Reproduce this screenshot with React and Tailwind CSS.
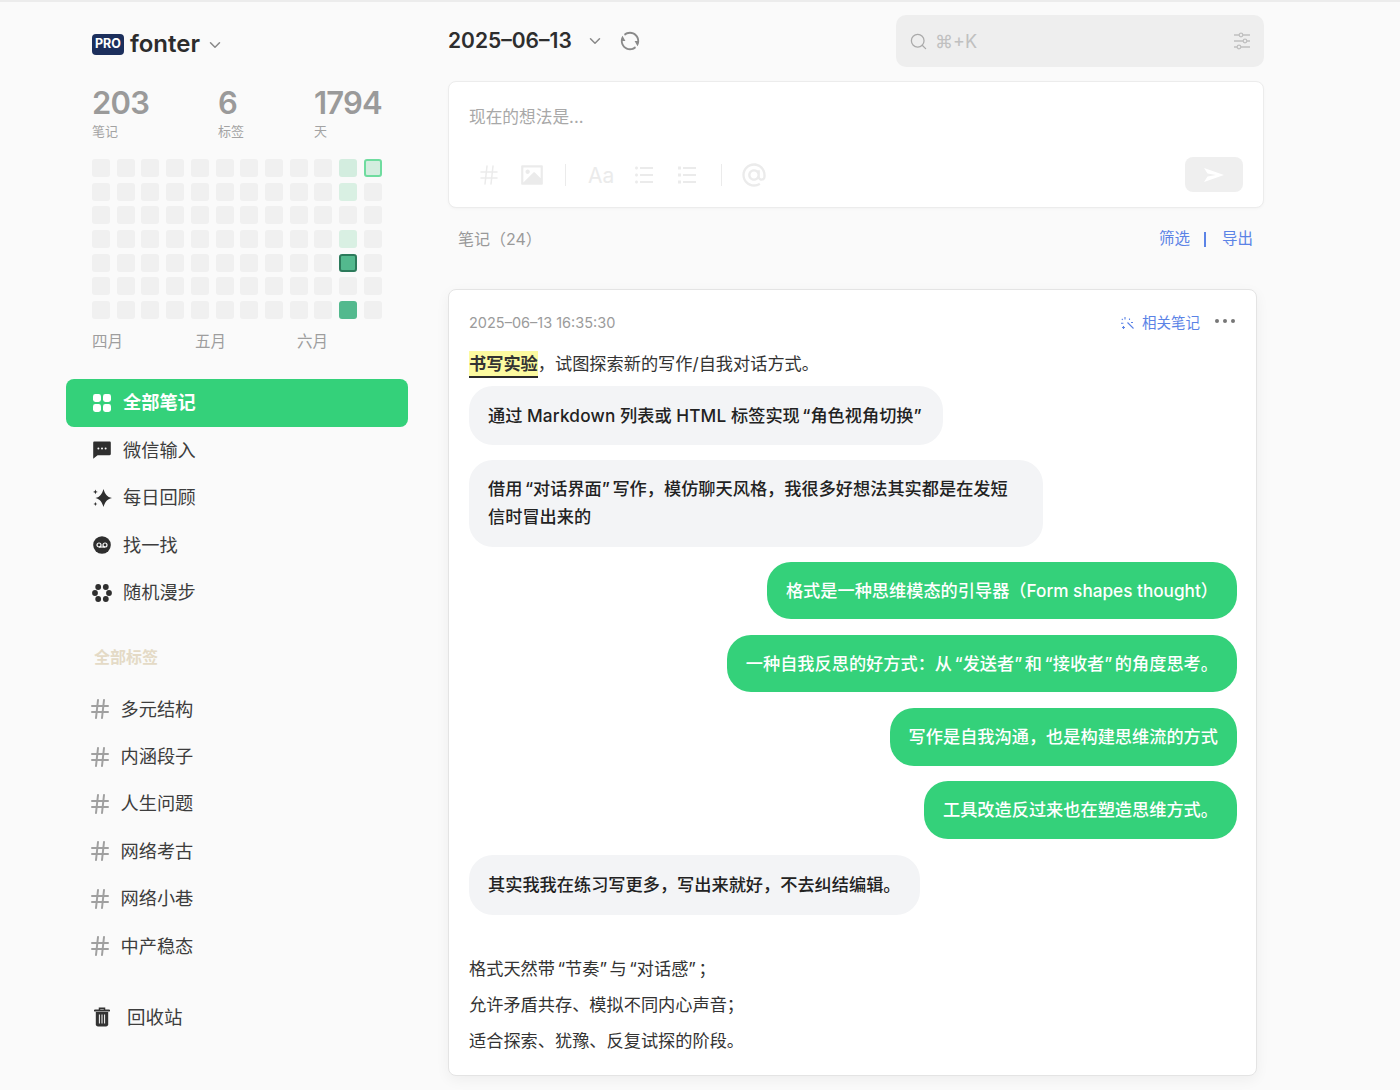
import React from "react";
import { ChevronDown, Search, Hash } from "lucide-react";
import { RiRefreshLine, RiImageFill, RiListUnordered, RiListCheck, RiAtLine } from "react-icons/ri";

const font = "font-['Inter','Noto_Sans_CJK_SC',sans-serif]";

const activity = {
  "0-10": "bg-[#d3eddf]",
  "0-11": "bg-[#d3eddf] border-2 border-[#6fdc9f]",
  "1-10": "bg-[#d9f0e3]",
  "3-10": "bg-[#d9f0e3]",
  "4-10": "bg-[#53b98e] border-2 border-[#2c7a5b]",
  "6-10": "bg-[#53b98e]",
};

const GridIcon = () => (
  <svg width="20" height="20" viewBox="0 0 20 20" fill="currentColor">
    <rect x="1" y="1" width="8" height="8" rx="2.4" />
    <rect x="11" y="1" width="8" height="8" rx="2.4" />
    <rect x="1" y="11" width="8" height="8" rx="2.4" />
    <rect x="11" y="11" width="8" height="8" rx="2.4" />
  </svg>
);

const ChatIcon = () => (
  <svg width="20" height="20" viewBox="0 0 20 20" fill="currentColor">
    <path d="M2.4 1.500h15.200c.7 0 1.200.5 1.200 1.200v11.400c0 .7-.5 1.200-1.200 1.200H5.600l-4.400 3.400V2.700c0-.7.5-1.200 1.200-1.200z" />
    <circle cx="6.400" cy="8.400" r="1" fill="#fafafa" />
    <circle cx="10" cy="8.400" r="1" fill="#fafafa" />
    <circle cx="13.600" cy="8.400" r="1" fill="#fafafa" />
  </svg>
);

const SparkIcon = () => (
  <svg width="20" height="20" viewBox="0 0 20 20" fill="currentColor">
    <path d="M11.500 1c1.500 5 3.500 8 8.500 9-5 1-7 4-8.500 9-1.500-5-3.500-8-8-9 4.500-1 6.500-4 8-9z" />
    <path d="M3.400 1.500l.7 1.700 1.700.7-1.700.7-.7 1.700-.7-1.700L1 3.900l1.700-.7zM3.400 14l.6 1.400 1.400.6-1.400.6-.6 1.400-.6-1.400-1.400-.6 1.400-.6z" />
  </svg>
);

const FindIcon = () => (
  <svg width="20" height="20" viewBox="0 0 20 20">
    <circle cx="10" cy="10" r="8.800" fill="currentColor" />
    <circle cx="7" cy="10" r="2" fill="none" stroke="#fafafa" strokeWidth="1.200" />
    <circle cx="13" cy="10" r="2" fill="none" stroke="#fafafa" strokeWidth="1.200" />
    <path d="M7 12h6" stroke="#fafafa" strokeWidth="1.200" />
  </svg>
);

const FlowerIcon = () => (
  <svg width="20" height="20" viewBox="0 0 20 20" fill="currentColor">
    <circle cx="6.200" cy="4" r="2.900" />
    <circle cx="13.800" cy="4" r="2.900" />
    <circle cx="3" cy="10" r="2.900" />
    <circle cx="17" cy="10" r="2.900" />
    <circle cx="6.200" cy="16" r="2.900" />
    <circle cx="13.800" cy="16" r="2.900" />
  </svg>
);

const TrashIcon = () => (
  <svg width="16" height="20" viewBox="0 0 16 20">
    <path d="M5.500 3V1.200h5V3" fill="none" stroke="#333" strokeWidth="1.500" />
    <path d="M1 3.500h14" stroke="#333" strokeWidth="2.200" strokeLinecap="round" />
    <path d="M1.800 5h12.400v12.300c0 1.300-.9 2.200-2.200 2.200H4c-1.300 0-2.200-.9-2.200-2.200z" fill="#333" />
    <path d="M5.400 7.500v9M8 7.500v9M10.600 7.500v9" stroke="#fafafa" strokeWidth="1" />
  </svg>
);

const SlidersIcon = () => (
  <svg width="20" height="20" viewBox="0 0 20 20" fill="none" stroke="currentColor" strokeWidth="1.300">
    <path d="M2 4h5M11 4h7M2 10h9M15 10h3M2 16h3M9 16h9" />
    <circle cx="9" cy="4" r="1.800" />
    <circle cx="13" cy="10" r="1.800" />
    <circle cx="7" cy="16" r="1.800" />
  </svg>
);

const SendIcon = () => (
  <svg width="22" height="16" viewBox="0 0 22 16" fill="white">
    <path d="M1 1l20 7-20 7 3.500-5.600L13 8 4.500 6.600z" />
  </svg>
);

const WandIcon = () => (
  <svg width="15" height="15" viewBox="0 0 15 15" fill="none" stroke="currentColor" strokeWidth="1.100">
    <path d="M7.500 6.500l6 6M5 1v2.400M1 7.200h2.400M9.500 2.500v1.500M1.800 2.800l1 1M11 6.500h2" />
    <path d="M3.500 10v3M2 11.500h3" />
  </svg>
);

// curly quotes sit wider in the reference than in Inter
const Open = () => <span className="ml-[2.500px]">“</span>;
const Close = () => <span className="mr-[2.500px]">”</span>;
const Latin = ({ children }) => <span className="tracking-[0.2px]">{children}</span>;

const Stat = ({ value, label, className }) => (
  <div className={`shrink-0 ${className}`}>
    <div className="text-[31px] leading-[32px] font-semibold text-[#9a9a9a] tracking-[-0.8px]">{value}</div>
    <div className="text-[13px] leading-[20px] text-[#a3a3a3] mt-[2px]">{label}</div>
  </div>
);

const NavItem = ({ icon, label, active }) => (
  <div className={`h-[47.500px] flex items-center pl-[26px] gap-[11px] text-[18.200px] rounded-[8px] ${active ? "bg-[#34d17a] text-white font-semibold" : "text-[#3d3d3d]"}`}>
    <span className={`w-[20px] flex justify-center ${active ? "text-white" : "text-[#2e2e2e]"}`}>{icon}</span>
    <span>{label}</span>
  </div>
);

const Tag = ({ label }) => (
  <div className="h-[47.400px] flex items-center pl-[22px] gap-[8.500px] text-[18.200px] text-[#3d3d3d]">
    <Hash size={24} strokeWidth={2} className="text-[#a0a0a0]" />
    <span>{label}</span>
  </div>
);

const Bubble = ({ mine, children, className }) => (
  <div className={`rounded-[24px] px-[19px] text-[17.200px] leading-[28px] font-medium ${mine ? "self-end bg-[#34d17a] text-white" : "self-start bg-[#f3f4f6] text-[#222]"} ${className}`}>
    {children}
  </div>
);

export default function App() {
  return (
    <div className={`${font} w-[1400px] h-[1090px] overflow-hidden bg-[#fafafa] border-t-2 border-[#ececec] flex pl-[66px]`}>
      {/* sidebar */}
      <aside className="w-[342px] shrink-0">
        <div className="h-[84px] pl-[26px] flex items-center">
          <span className="w-[32px] h-[21px] rounded-[4px] bg-[#1c2f5c] text-white text-[12.500px] font-bold flex items-center justify-center mr-[6px]">PRO</span>
          <span className="text-[24px] font-semibold text-[#2c2c2c] leading-none">fonter</span>
          <ChevronDown size={18} strokeWidth={2} className="text-[#888] ml-[6px] mt-[1px]" />
        </div>

        <div className="ml-[26px] mt-[1px] w-[290px] flex">
          <Stat value="203" label="笔记" className="w-[126px]" />
          <Stat value="6" label="标签" className="w-[96px]" />
          <Stat value="1794" label="天" className="w-[68px]" />
        </div>

        <div className="ml-[26px] w-[290px] mt-[18px] flex flex-col gap-[5.700px]">
          {[0, 1, 2, 3, 4, 5, 6].map((row) => (
            <div key={row} className="flex justify-between">
              {[0, 1, 2, 3, 4, 5, 6, 7, 8, 9, 10, 11].map((col) => (
                <div key={col} className={`w-[18px] h-[18px] rounded-[3px] ${activity[`${row}-${col}`] || "bg-[#f0f0f0]"}`} />
              ))}
            </div>
          ))}
        </div>

        <div className="ml-[26px] mt-[12px] flex text-[15.500px] leading-[22px] text-[#9e9e9e]">
          <span className="w-[103px]">四月</span>
          <span className="w-[102px]">五月</span>
          <span>六月</span>
        </div>

        <nav className="mt-[26px]">
          <NavItem active icon={<GridIcon />} label="全部笔记" />
          <NavItem icon={<ChatIcon />} label="微信输入" />
          <NavItem icon={<SparkIcon />} label="每日回顾" />
          <NavItem icon={<FindIcon />} label="找一找" />
          <NavItem icon={<FlowerIcon />} label="随机漫步" />
        </nav>

        <div className="ml-[28px] mt-[28px] text-[16px] leading-[24px] font-semibold text-[#e4dac6]">全部标签</div>

        <div className="mt-[17px]">
          {["多元结构", "内涵段子", "人生问题", "网络考古", "网络小巷", "中产稳态"].map((t) => (
            <Tag key={t} label={t} />
          ))}
        </div>

        <div className="mt-[24px] pl-[28px] h-[47px] flex items-center gap-[17px] text-[18.500px] text-[#3d3d3d]">
          <TrashIcon />
          <span>回收站</span>
        </div>
      </aside>

      {/* main */}
      <main className="w-[816px] ml-[40px] shrink-0">
        <div className="flex items-center h-[52px] mt-[13px]">
          <span className="text-[21px] font-semibold text-[#2e2e2e] leading-none -translate-y-[1px]">2025–06–13</span>
          <ChevronDown size={18} strokeWidth={2} className="text-[#888] ml-[14px]" />
          <RiRefreshLine size={22} className="text-[#8a8a8a] ml-[15px]" />
          <div className="ml-auto w-[368px] h-[52px] rounded-[10px] bg-[#eeeeee] flex items-center pl-[13px] pr-[12px] gap-[7px] text-[#c0c0c0]">
            <Search size={19} strokeWidth={1.600} className="text-[#aaa]" />
            <span className="text-[18px]">⌘+K</span>
            <span className="ml-auto"><SlidersIcon /></span>
          </div>
        </div>

        <div className="mt-[14px] h-[127px] bg-white rounded-[8px] border border-[#ececec] shadow-[0_1px_3px_rgba(0,0,0,0.03)] px-[20px] pt-[24px] relative">
          <div className="text-[16.700px] leading-[22px] text-[#a8a8a8]">现在的想法是...</div>
          <div className="mt-[33px] flex items-center text-[#ebebeb]">
            <Hash size={24} strokeWidth={1.500} className="ml-[8px]" />
            <RiImageFill size={26} className="ml-[18px]" />
            <span className="w-px h-[22px] bg-[#ebebeb] ml-[20px]" />
            <span className="ml-[22px] text-[21px] leading-none">Aa</span>
            <RiListUnordered size={24} className="ml-[18px]" />
            <RiListCheck size={24} className="ml-[19px]" />
            <span className="w-px h-[22px] bg-[#ebebeb] ml-[22px]" />
            <RiAtLine size={28} className="ml-[18px]" />
          </div>
          <div className="absolute right-[20px] bottom-[15px] w-[58px] h-[35px] rounded-[8px] bg-[#efefef] flex items-center justify-center">
            <SendIcon />
          </div>
        </div>

        <div className="mt-[19px] flex items-center justify-between pl-[10px] pr-[11px] text-[16px] leading-[24px]">
          <span className="text-[#999]">笔记（24）</span>
          <span className="flex items-center text-[15.500px] text-[#5b83e6]">
            <span>筛选</span>
            <span className="w-[2px] h-[15px] bg-[#5b83e6] ml-[14px] mr-[16px]" />
            <span>导出</span>
          </span>
        </div>

        <article className="mt-[38px] w-[809px] h-[787px] bg-white rounded-[8px] border border-[#e4e4e4] shadow-[0_4px_14px_rgba(0,0,0,0.05)] pl-[20px] pr-[19px] flex flex-col">
          <div className="mt-[21px] h-[24px] flex items-center">
            <span className="text-[14.500px] text-[#9b9b9b]">2025–06–13 16:35:30</span>
            <span className="ml-auto flex items-center gap-[7px] text-[14.500px] text-[#5b83e6]">
              <WandIcon />
              相关笔记
            </span>
            <span className="ml-[15px] mr-[2px] flex gap-[4px] -translate-y-[2px]">
              <i className="w-[4px] h-[4px] rounded-full bg-[#777]" />
              <i className="w-[4px] h-[4px] rounded-full bg-[#777]" />
              <i className="w-[4px] h-[4px] rounded-full bg-[#777]" />
            </span>
          </div>

          <p className="mt-[14px] h-[30px] flex items-center text-[17.200px] text-[#333]">
            <span className="bg-[#fcfaa0] border-b-2 border-[#2a2a2a] font-semibold leading-[25px]">书写实验</span>
            <span>，试图探索新的写作/自我对话方式。</span>
          </p>

          <div className="flex flex-col mt-[7px]">
            <Bubble className="h-[59px] flex items-center mb-[15px]">
              <span>通过 <Latin>Markdown</Latin> 列表或 <Latin>HTML</Latin> 标签实现<Open />角色视角切换<Close /></span>
            </Bubble>
            <Bubble className="w-[574px] h-[87px] py-[15px] mb-[15px]">
              借用<Open />对话界面<Close />写作，模仿聊天风格，我很多好想法其实都是在发短<br />信时冒出来的
            </Bubble>
            <Bubble mine className="h-[57px] flex items-center mb-[16px]">格式是一种思维模态的引导器（Form shapes thought）</Bubble>
            <Bubble mine className="h-[57px] flex items-center mb-[16px]">
              <span>一种自我反思的好方式：从<Open />发送者<Close />和<Open />接收者<Close />的角度思考。</span>
            </Bubble>
            <Bubble mine className="h-[58px] flex items-center mb-[15px]">写作是自我沟通，也是构建思维流的方式</Bubble>
            <Bubble mine className="h-[58px] flex items-center mb-[16px]">工具改造反过来也在塑造思维方式。</Bubble>
            <Bubble className="h-[60px] flex items-center">其实我我在练习写更多，写出来就好，不去纠结编辑。</Bubble>
          </div>

          <div className="mt-[36px] text-[17.200px] leading-[36px] text-[#333]">
            <p>格式天然带<Open />节奏<Close />与<Open />对话感<Close />；</p>
            <p>允许矛盾共存、模拟不同内心声音；</p>
            <p>适合探索、犹豫、反复试探的阶段。</p>
          </div>
        </article>
      </main>
    </div>
  );
}
